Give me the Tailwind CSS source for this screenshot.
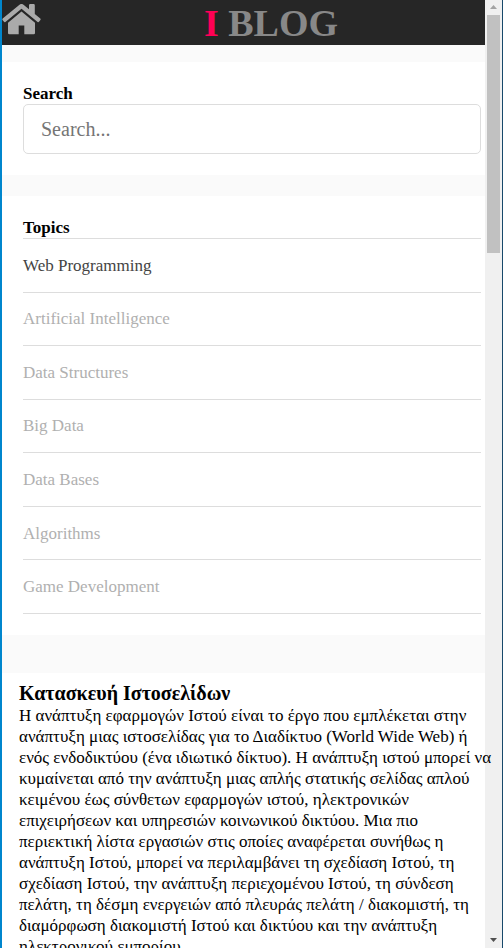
<!DOCTYPE html>
<html lang="el">
<head>
<meta charset="utf-8">
<meta name="viewport" content="width=device-width, initial-scale=1">
<title>I BLOG</title>
<script src="https://cdn.jsdelivr.net/npm/@tailwindcss/browser@4"></script>
</head>
<body class="flex h-screen overflow-hidden border-l-2 border-[#0086cd] bg-white font-['Liberation_Serif',serif] text-[17px] leading-[21px] text-black">
<div class="z-10 min-w-0 flex-1">
  <header class="flex h-[45px] items-center bg-[#262626]">
    <a href="#" aria-label="Home" class="block self-start pt-1 pr-4">
      <svg class="h-[31px] w-[39px]" viewBox="0 0 39 31" fill="#aaaaaa" aria-hidden="true">
        <path d="M17.5.7Q19.5-.8 21.5.7L27 5.3V1.2Q27 0 28.2 0H31.6Q32.8 0 32.8 1.2V10L38.3 14.5Q39 15.2 38.4 16L37 17.8Q36.4 18.5 35.6 17.9L19.5 4.7 3.4 17.9Q2.6 18.5 2 17.8L.5 16Q0 15.2.7 14.5Z"/>
        <path d="M19.5 7.6 33 18.7V29Q33 30.3 31.7 30.3H22.3V21.6H16.7V30.3H7.3Q6 30.3 6 29V18.7Z"/>
      </svg>
    </a>
    <h1 class="flex-1 text-center text-[38px] leading-[42px] font-bold text-[#888888]"><span class="text-[#ff0055]">I</span> BLOG</h1>
  </header>
  <main class="bg-[#fafafa] pt-[17px]">
    <section class="bg-white pt-[21px] pr-1 pb-[21px] pl-[21px]">
      <label for="search" class="block font-bold">Search</label>
      <input id="search" type="search" placeholder="Search..." class="block h-[50px] w-full rounded-[5px] border border-[#dddddd] bg-white px-[17px] text-[20px] placeholder:text-[#757575]">
    </section>
    <nav aria-labelledby="topics" class="mt-[21px] bg-white pt-[21px] pr-1 pb-[21px] pl-[21px]">
      <h2 id="topics" class="font-bold">Topics</h2>
      <ul class="grid h-[376px] grid-rows-7 border-t border-[#dddddd] text-[#b0b0b0]">
        <li class="flex items-center border-b border-[#dddddd]"><a href="#" class="text-[#444444]">Web Programming</a></li>
        <li class="flex items-center border-b border-[#dddddd]"><a href="#">Artificial Intelligence</a></li>
        <li class="flex items-center border-b border-[#dddddd]"><a href="#">Data Structures</a></li>
        <li class="flex items-center border-b border-[#dddddd]"><a href="#">Big Data</a></li>
        <li class="flex items-center border-b border-[#dddddd]"><a href="#">Data Bases</a></li>
        <li class="flex items-center border-b border-[#dddddd]"><a href="#">Algorithms</a></li>
        <li class="flex items-center border-b border-[#dddddd]"><a href="#">Game Development</a></li>
      </ul>
    </nav>
    <article class="mt-[38px] bg-white pt-2 pl-[17px]">
      <h2 class="text-[20px] leading-6 font-bold">Κατασκευή Ιστοσελίδων</h2>
      <p class="whitespace-nowrap">Η ανάπτυξη εφαρμογών Ιστού είναι το έργο που εμπλέκεται στην<br>
      ανάπτυξη μιας ιστοσελίδας για το Διαδίκτυο (World Wide Web) ή<br>
      ενός ενδοδικτύου (ένα ιδιωτικό δίκτυο). Η ανάπτυξη ιστού μπορεί να<br>
      κυμαίνεται από την ανάπτυξη μιας απλής στατικής σελίδας απλού<br>
      κειμένου έως σύνθετων εφαρμογών ιστού, ηλεκτρονικών<br>
      επιχειρήσεων και υπηρεσιών κοινωνικού δικτύου. Μια πιο<br>
      περιεκτική λίστα εργασιών στις οποίες αναφέρεται συνήθως η<br>
      ανάπτυξη Ιστού, μπορεί να περιλαμβάνει τη σχεδίαση Ιστού, τη<br>
      σχεδίαση Ιστού, την ανάπτυξη περιεχομένου Ιστού, τη σύνδεση<br>
      πελάτη, τη δέσμη ενεργειών από πλευράς πελάτη / διακομιστή, τη<br>
      διαμόρφωση διακομιστή Ιστού και δικτύου και την ανάπτυξη<br>
      ηλεκτρονικού εμπορίου.</p>
    </article>
  </main>
</div>
<div class="flex w-[18px] shrink-0 flex-col items-center border-r border-[#17496b] bg-[#f0f0f0]" aria-hidden="true">
  <svg class="h-[15px] w-[17px] shrink-0" viewBox="0 0 17 15" fill="#a3a3a3"><path d="M5 9 8.5 5 12 9Z"/></svg>
  <div class="h-[238px] w-[13px] bg-[#c1c1c1]"></div>
  <svg class="mt-auto h-[17px] w-[17px] shrink-0" viewBox="0 0 17 17" fill="#505050"><path d="M5 7H12L8.5 11Z"/></svg>
</div>
</body>
</html>
